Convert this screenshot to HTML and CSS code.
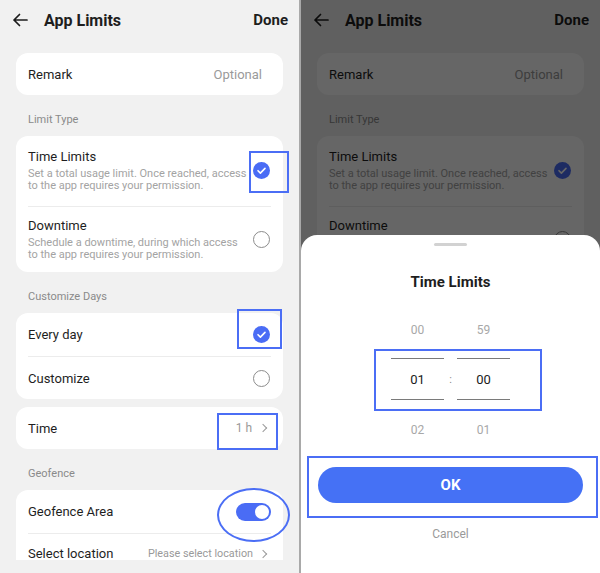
FILE: index.html
```html
<!DOCTYPE html>
<html lang="en">
<head>
    <meta charset="UTF-8">
    <title>App Limits</title>
    <meta name="viewport" content="width=device-width, initial-scale=1">
    <link rel="stylesheet" href="styles.css">
</head>
<body>
    <div class="frame">
        <!-- left screen : the settings page with annotations -->
        <div class="phone">
            <div class="scroll">
                <div class="topbar">
                    <svg class="back" width="16" height="14" viewBox="0 0 16 14"><path d="M15 7H2M7.5 1.5L2 7l5.5 5.5" fill="none" stroke="#1c1c1c" stroke-width="1.7" stroke-linecap="round" stroke-linejoin="round"/></svg>
                    <span class="title">App Limits</span>
                    <span class="done">Done</span>
                </div>

                <div class="card">
                    <div class="row"><span class="name">Remark</span><span class="value">Optional</span></div>
                </div>

                <div class="section">Limit Type</div>
                <div class="card">
                    <div class="option">
                        <div class="text">
                            <div class="name">Time Limits</div>
                            <div class="desc">Set a total usage limit. Once reached, access to the app requires your permission.</div>
                        </div>
                        <span class="radio on"></span>
                    </div>
                    <div class="option">
                        <div class="text">
                            <div class="name">Downtime</div>
                            <div class="desc">Schedule a downtime, during which access to the app requires your permission.</div>
                        </div>
                        <span class="radio"></span>
                    </div>
                </div>

                <div class="section">Customize Days</div>
                <div class="card">
                    <div class="row"><span class="name">Every day</span><span class="radio on"></span></div>
                    <div class="row"><span class="name">Customize</span><span class="radio"></span></div>
                </div>

                <div class="card gap">
                    <div class="row"><span class="name">Time</span><span class="link">1 h<i class="chev"></i></span></div>
                </div>

                <div class="section">Geofence</div>
                <div class="card cut">
                    <div class="row"><span class="name">Geofence Area</span><span class="switch"></span></div>
                    <div class="row"><span class="name">Select location</span><span class="link small">Please select location<i class="chev"></i></span></div>
                </div>
            </div>

            <span class="mark mark-time"></span>
            <span class="mark mark-day"></span>
            <span class="mark mark-hours"></span>
            <span class="mark ring"></span>
        </div>

        <!-- right screen : same page dimmed, picker sheet on top -->
        <div class="phone">
            <div class="scroll">
                <div class="topbar">
                    <svg class="back" width="16" height="14" viewBox="0 0 16 14"><path d="M15 7H2M7.5 1.5L2 7l5.5 5.5" fill="none" stroke="#1c1c1c" stroke-width="1.7" stroke-linecap="round" stroke-linejoin="round"/></svg>
                    <span class="title">App Limits</span>
                    <span class="done">Done</span>
                </div>

                <div class="card">
                    <div class="row"><span class="name">Remark</span><span class="value">Optional</span></div>
                </div>

                <div class="section">Limit Type</div>
                <div class="card">
                    <div class="option">
                        <div class="text">
                            <div class="name">Time Limits</div>
                            <div class="desc">Set a total usage limit. Once reached, access to the app requires your permission.</div>
                        </div>
                        <span class="radio on"></span>
                    </div>
                    <div class="option">
                        <div class="text">
                            <div class="name">Downtime</div>
                            <div class="desc">Schedule a downtime, during which access to the app requires your permission.</div>
                        </div>
                        <span class="radio"></span>
                    </div>
                </div>
            </div>

            <div class="dim"></div>

            <div class="sheet">
                <div class="handle"></div>
                <div class="sheet-title">Time Limits</div>
                <div class="picker">
                    <div class="col">
                        <div class="cell">00</div>
                        <div class="cell sel">01</div>
                        <div class="cell">02</div>
                    </div>
                    <div class="col colon">
                        <div class="cell"></div>
                        <div class="cell sel">:</div>
                        <div class="cell"></div>
                    </div>
                    <div class="col">
                        <div class="cell">59</div>
                        <div class="cell sel">00</div>
                        <div class="cell">01</div>
                    </div>
                </div>
                <button class="ok">OK</button>
                <div class="cancel">Cancel</div>
            </div>

            <span class="mark mark-picker"></span>
            <span class="mark mark-ok"></span>
        </div>
    </div>
</body>
</html>
```

FILE: styles.css
```css
* {
    box-sizing: border-box;
}

body {
    margin: 0;
    font-family: Roboto, "Noto Sans", sans-serif;
    color: #1e1e1e;
    background: #fff;
}

.frame {
    display: flex;
    gap: 2px;
    width: 600px;
    height: 573px;
    background: #a9a9a9;
}

.phone {
    position: relative;
    width: 299px;
    height: 573px;
    background: #f1f1f1;
    overflow: hidden;
}

.scroll {
    height: 560px;
    overflow: hidden;
}

.topbar {
    display: flex;
    align-items: center;
    height: 40px;
    padding: 0 11px 0 12px;
}

    .topbar .back {
        margin-right: 16px;
    }

    .topbar .title {
        font-size: 16px;
        font-weight: 700;
        flex: 1;
    }

    .topbar .done {
        font-size: 15px;
        font-weight: 700;
    }

.card {
    margin: 13px 16px 0 16px;
    padding: 0 12px;
    background: #fff;
    border-radius: 12px;
}

    .card.gap {
        margin-top: 8px;
    }

    .card.cut {
        border-radius: 12px 12px 0 0;
    }

.section {
    font-size: 11px;
    line-height: 14px;
    color: #8a8a8a;
    padding: 18px 0 0 28px;
    margin-bottom: -4px;
}

.row {
    display: flex;
    align-items: center;
    justify-content: space-between;
    height: 43px;
    font-size: 13px;
}

    .row + .row, .option + .option {
        border-top: 1px solid #ececec;
    }

    .card > .row:only-child {
        height: 42px;
    }

    .card.cut .row + .row {
        height: 40px;
    }

.value {
    color: #9a9a9a;
    margin-right: 9px;
}

.option {
    display: flex;
    align-items: center;
    justify-content: space-between;
    padding: 12px 0 14px 0;
}

    .option + .option {
        padding: 10px 0 11px 0;
    }

    .option .text {
        width: 222px;
    }

    .option .name {
        font-size: 13px;
        line-height: 18px;
    }

    .option .desc {
        margin-top: 2px;
        font-size: 11px;
        line-height: 12px;
        color: #a3a3a3;
    }

.radio {
    width: 17px;
    height: 17px;
    margin-right: 1px;
    border: 1px solid #8c8c8c;
    border-radius: 50%;
    flex: none;
}

    .radio.on {
        border: none;
        background: #4a6cf5 url("data:image/svg+xml,%3Csvg xmlns='http://www.w3.org/2000/svg' viewBox='0 0 17 17'%3E%3Cpath d='M5 8.7l2.4 2.4L12 6.4' fill='none' stroke='white' stroke-width='1.6' stroke-linecap='round' stroke-linejoin='round'/%3E%3C/svg%3E") center / 17px no-repeat;
    }

.link {
    display: flex;
    align-items: center;
    gap: 8px;
    color: #999;
    font-size: 12px;
    margin-right: 3px;
}

    .link.small {
        font-size: 10.8px;
        gap: 7px;
    }

.chev {
    width: 6px;
    height: 6px;
    border-top: 1.2px solid #9a9a9a;
    border-right: 1.2px solid #9a9a9a;
    transform: rotate(45deg);
    margin-right: 2px;
}

.switch {
    position: relative;
    width: 35px;
    height: 18px;
    border-radius: 9px;
    background: #4a6cf5;
}

    .switch::after {
        content: "";
        position: absolute;
        right: 2px;
        top: 2px;
        width: 14px;
        height: 14px;
        border-radius: 50%;
        background: #fff;
    }

/* annotation boxes drawn over the screenshots */
.mark {
    position: absolute;
    border: 2px solid #4b6ef5;
}

.mark-time {
    left: 249px;
    top: 151px;
    width: 40px;
    height: 42px;
}

.mark-day {
    left: 237px;
    top: 309px;
    width: 45px;
    height: 40px;
}

.mark-hours {
    left: 217px;
    top: 413px;
    width: 61px;
    height: 37px;
}

.ring {
    left: 217px;
    top: 488px;
    width: 73px;
    height: 54px;
    border-radius: 50%;
}

.mark-picker {
    left: 73px;
    top: 349px;
    width: 168px;
    height: 62px;
}

.mark-ok {
    left: 6px;
    top: 456px;
    width: 291px;
    height: 62px;
}

/* dimmed layer and bottom sheet */
.dim {
    position: absolute;
    inset: 0;
    background: rgba(0, 0, 0, 0.6);
}

.sheet {
    position: absolute;
    left: 0;
    right: 0;
    top: 235px;
    bottom: 0;
    background: #fff;
    border-radius: 16px 16px 0 0;
    display: flex;
    flex-direction: column;
    align-items: center;
}

.handle {
    width: 33px;
    height: 3px;
    margin-top: 8px;
    border-radius: 2px;
    background: #d2d2d2;
}

.sheet-title {
    margin-top: 26px;
    font-size: 15px;
    line-height: 20px;
    font-weight: 700;
}

.picker {
    display: flex;
    margin-top: 13px;
}

.col {
    width: 53px;
    display: flex;
    flex-direction: column;
}

    .col.colon {
        width: 13px;
    }

.cell {
    height: 50px;
    display: flex;
    align-items: center;
    justify-content: center;
    font-size: 12px;
    color: #a8a8a8;
}

    .cell.sel {
        height: 42px;
        margin: 3px 0 5px 0;
        color: #1c1c1c;
        font-size: 13px;
        border-top: 1px solid #7a7a7a;
        border-bottom: 1px solid #7a7a7a;
    }

    .colon .cell.sel {
        border: none;
        font-size: 11px;
        color: #8a8a8a;
    }

.ok {
    margin-top: 12px;
    width: 265px;
    height: 36px;
    border: none;
    border-radius: 18px;
    background: #4571f5;
    color: #fff;
    font-family: inherit;
    font-size: 15px;
    font-weight: 700;
}

.cancel {
    margin-top: 23px;
    font-size: 12px;
    line-height: 16px;
    color: #9a9a9a;
}
```
